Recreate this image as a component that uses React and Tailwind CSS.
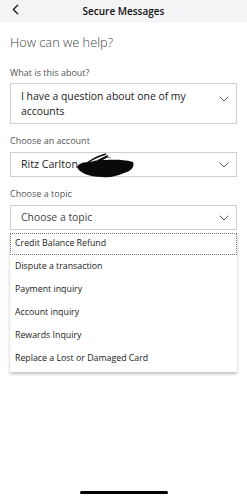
import { ChevronDown, ChevronLeft } from 'lucide-react';

const topics = [
    'Dispute a transaction',
    'Payment inquiry',
    'Account inquiry',
    'Rewards Inquiry',
    'Replace a Lost or Damaged Card',
];

const Field = ({ children, className = '' }) => (
    <div className={`flex items-center justify-between border border-[#cfcfcf] pl-[10px] pr-[4px] text-[#222] ${className}`}>
        {children}
    </div>
);

const App = () => {
    return (
        <div className="w-[247px] h-[500px] bg-white flex flex-col relative overflow-hidden" style={{ fontFamily: '"Open Sans", "Noto Sans", sans-serif' }}>
            {/* Header */}
            <div className="h-[22px] bg-[#f4f4f6] flex items-center relative">
                <ChevronLeft size={17} strokeWidth={2} className="absolute left-[7px] top-[1px] text-[#222]" />
                <div className="w-full text-center text-[10px] font-semibold text-[#111] leading-none">Secure Messages</div>
            </div>

            <div className="px-[10px]">
                <h1 className="mt-[10px] text-[12.8px] font-light text-[#444] leading-[20px]">How can we help?</h1>

                <div className="mt-[15px] text-[9px] text-[#555] leading-[12px]">What is this about?</div>
                <Field className="mt-[4px] h-[41px]">
                    <div className="text-[10.4px] leading-[15px]">I have a question about one of my<br />accounts</div>
                    <ChevronDown size={16} strokeWidth={1.3} className="text-[#444] self-start mt-[7px]" />
                </Field>

                <div className="mt-[11px] text-[9px] text-[#555] leading-[12px]">Choose an account</div>
                <div className="relative mt-[5px]">
                    <Field className="h-[25px]">
                        <div className="text-[10.6px] leading-[15px]">Ritz Carlton</div>
                        <ChevronDown size={16} strokeWidth={1.3} className="text-[#444]" />
                    </Field>
                    {/* redaction scribble */}
                    <svg className="absolute left-[64px] top-[1px]" width="62" height="26" viewBox="0 0 62 26">
                        <path d="M3 14 C5 10 10 9 16 9 C21 8 26 6 30 7 C38 7 48 6 59 9 C61 14 57 18 50 20 C43 23 36 25 28 24 C21 24 16 23 11 21 C7 19 4 17 3 14 Z" fill="#0a0a0a" />
                        <path d="M6 13 C10 10 14 10 20 12 C16 14 12 16 8 16 Z" fill="#0a0a0a" />
                        <path d="M11 12 C16 7 22 4 32 1" stroke="#0a0a0a" strokeWidth="1.4" fill="none" />
                        <path d="M24 8 L34 3" stroke="#0a0a0a" strokeWidth="2.2" fill="none" />
                        <path d="M33 4 L37 5" stroke="#888" strokeWidth="1" fill="none" />
                    </svg>
                </div>

                <div className="mt-[11px] text-[9px] text-[#555] leading-[12px]">Choose a topic</div>
                <Field className="mt-[5px] h-[25px]">
                    <div className="text-[10.4px] leading-[15px] text-[#444]">Choose a topic</div>
                    <ChevronDown size={16} strokeWidth={1.3} className="text-[#444]" />
                </Field>

                {/* Dropdown options */}
                <div className="mt-[3px] bg-white shadow-[0_2px_3px_rgba(0,0,0,0.25)] pb-[2px]">
                    <div className="h-[22px] border border-dotted border-[#777] flex items-center pl-[4px] text-[8.8px] text-[#222]">Credit Balance Refund</div>
                    {topics.map((t) => (
                        <div key={t} className="h-[23px] flex items-center pl-[5px] text-[8.8px] text-[#222]">{t}</div>
                    ))}
                </div>
            </div>

            {/* Home indicator */}
            <div className="absolute bottom-[6px] left-[80px] w-[88px] h-[3px] rounded-full bg-black"></div>
        </div>
    );
};

export default App;
